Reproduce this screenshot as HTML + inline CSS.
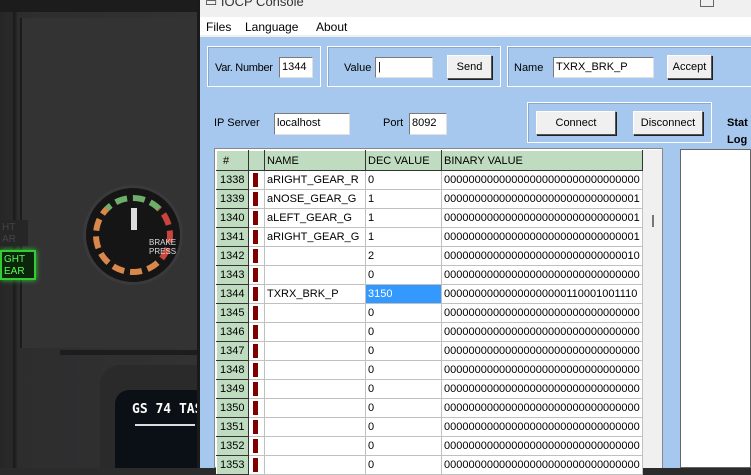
<!DOCTYPE html>
<html><head><meta charset="utf-8"><style>
*{margin:0;padding:0;box-sizing:border-box}
body{width:751px;height:468px;overflow:hidden;position:relative;background:#2b2b2c;font-family:"Liberation Sans",sans-serif;font-size:11px;color:#000}
.a{position:absolute;white-space:nowrap}
.grp{position:absolute;border:1px solid #fff;box-shadow:inset 1px 1px 0 #8aa8c8}
.inp{position:absolute;background:#fff;border:1px solid #7a7a7a;border-right-color:#e0e0e0;border-bottom-color:#e0e0e0;padding:1px 2px;font-size:11px;line-height:17px;white-space:nowrap;overflow:hidden}
.btn{position:absolute;background:#f0f0f0;border:1px solid #fff;border-right-color:#555;border-bottom-color:#555;box-shadow:1px 1px 0 #222;text-align:center;font-size:11px}
table{border-collapse:collapse;position:absolute;left:216px;top:150px;table-layout:fixed;width:426px}
td{height:19px;border:1px solid #c0c0c0;padding:0 2px;font-size:11px;white-space:nowrap;overflow:hidden;background:#fff;line-height:16px}
td.n{background:#c0dcc0;border:1px solid #fff;border-right-color:#333;border-bottom-color:#333;padding-left:3px}
.mk{display:inline-block;width:5px;height:14px;background:#800000;vertical-align:middle;margin-left:2px}
tr.h td{background:#c0dcc0;border:1px solid #fff;border-right-color:#333;border-bottom-color:#333;height:20px}
</style></head><body>
<div class="a" style="left:0;top:0;width:198px;height:468px;background:linear-gradient(90deg,#262627 0,#2a2a2b 12px,#1a1a1a 14px,#2d2d2e 18px,#323233 200px)"></div>
<div class="a" style="left:0;top:0;width:198px;height:12px;background:#1c1c1c"></div>
<div class="a" style="left:20px;top:18px;width:178px;height:330px;background:#333334;border-left:2px solid #1b1b1b"></div>
<div class="a" style="left:60px;top:350px;width:138px;height:5px;background:#1d1d1d"></div>
<div class="a" style="left:100px;top:365px;width:98px;height:103px;background:#2a2a2b;border-radius:20px 0 0 0"></div>
<div class="a" style="left:115px;top:390px;width:83px;height:78px;background:#0b1016;border-radius:14px 0 0 0"></div>
<div class="a" style="left:132px;top:402px;color:#fff;font-size:13px;font-weight:bold;font-family:'DejaVu Sans Mono',monospace">GS 74 TAS</div>
<div class="a" style="left:135px;top:424px;width:60px;height:2px;background:#ddd"></div>
<div class="a" style="left:83px;top:185px;width:100px;height:100px;border-radius:50%;background:#151516;border:3px solid #3a3a3c"></div>
<div class="a" style="left:93px;top:195px;width:80px;height:80px;border-radius:50%;border:6px dashed #d9884a;border-top-color:#6fae6a;border-right-color:#c8443c"></div>
<div class="a" style="left:131px;top:208px;width:6px;height:22px;background:#ddd"></div>
<div class="a" style="left:149px;top:238px;color:#ddd;font-size:8px;line-height:9px">BRAKE<br>PRESS</div>
<div class="a" style="left:0;top:250px;width:36px;height:30px;border:2px solid #3c3;background:#0b260b;color:#5f5;font-size:10px;line-height:12px;padding:2px 0 0 2px;box-shadow:0 0 5px #3c3">GHT<br>EAR</div>
<div class="a" style="left:0;top:220px;width:28px;height:26px;background:#262626;color:#444;font-size:10px;line-height:12px;padding:2px">HT<br>AR</div>

<div class="a" style="left:197px;top:0;width:3px;height:468px;background:#1a1a1a"></div>
<div class="a" style="left:200px;top:0;width:551px;height:17px;background:#f0f0f0"></div>
<div class="a" style="left:205px;top:-6px;font-size:13px;color:#333">▭ IOCP Console</div>
<div class="a" style="left:700px;top:0;width:14px;height:7px;border:1px solid #666;border-top:none"></div>
<div class="a" style="left:200px;top:17px;width:551px;height:18px;background:#fff"></div>
<div class="a" style="left:206px;top:20px;font-size:12px">Files</div>
<div class="a" style="left:245px;top:20px;font-size:12px">Language</div>
<div class="a" style="left:316px;top:20px;font-size:12px">About</div>
<div class="a" style="left:200px;top:35px;width:551px;height:2px;background:#f0f0f0"></div>
<div class="a" style="left:200px;top:37px;width:551px;height:431px;background:#a6c8ee"></div>

<div class="grp" style="left:207px;top:46px;width:114px;height:41px"></div>
<div class="a" style="left:215px;top:62px;letter-spacing:-0.3px">Var. Number</div>
<div class="inp" style="left:279px;top:57px;width:34px;height:21px">1344</div>
<div class="grp" style="left:327px;top:46px;width:174px;height:41px"></div>
<div class="a" style="left:344px;top:62px">Value</div>
<div class="inp" style="left:375px;top:57px;width:58px;height:21px">|</div>
<div class="btn" style="left:447px;top:55px;width:45px;height:24px;line-height:22px">Send</div>
<div class="grp" style="left:507px;top:46px;width:250px;height:41px"></div>
<div class="a" style="left:514px;top:62px">Name</div>
<div class="inp" style="left:553px;top:57px;width:101px;height:21px">TXRX_BRK_P</div>
<div class="btn" style="left:667px;top:55px;width:45px;height:24px;line-height:22px">Accept</div>

<div class="a" style="left:214px;top:117px">IP Server</div>
<div class="inp" style="left:274px;top:113px;width:76px;height:22px">localhost</div>
<div class="a" style="left:383px;top:117px">Port</div>
<div class="inp" style="left:409px;top:113px;width:38px;height:22px">8092</div>
<div class="grp" style="left:527px;top:102px;width:185px;height:41px"></div>
<div class="btn" style="left:516px;top:111px;width:74px;height:24px;line-height:22px;left:536px;width:80px">Connect</div>
<div class="btn" style="left:633px;top:111px;width:70px;height:24px;line-height:22px">Disconnect</div>
<div class="a" style="left:727px;top:117px;font-weight:bold">Stat</div>
<div class="a" style="left:727px;top:134px;font-weight:bold">Log</div>

<div class="a" style="left:214px;top:148px;width:449px;height:320px;background:#fff;border:1px solid #888"></div>
<div class="a" style="left:643px;top:150px;width:19px;height:318px;background:#f0f0f0"></div>
<div class="a" style="left:652px;top:215px;width:2px;height:12px;background:#777"></div>
<div class="a" style="left:680px;top:149px;width:71px;height:319px;background:#fff;border:1px solid #666"></div>

<table>
<colgroup><col style="width:32px"><col style="width:16px"><col style="width:101px"><col style="width:76px"><col style="width:201px"></colgroup>
<tr class="h"><td style="padding-left:6px">#</td><td></td><td>NAME</td><td>DEC VALUE</td><td>BINARY VALUE</td></tr>
<tr><td class="n">1338</td><td><span class="mk"></span></td><td>aRIGHT_GEAR_R</td><td>0</td><td>00000000000000000000000000000000</td></tr>
<tr><td class="n">1339</td><td><span class="mk"></span></td><td>aNOSE_GEAR_G</td><td>1</td><td>00000000000000000000000000000001</td></tr>
<tr><td class="n">1340</td><td><span class="mk"></span></td><td>aLEFT_GEAR_G</td><td>1</td><td>00000000000000000000000000000001</td></tr>
<tr><td class="n">1341</td><td><span class="mk"></span></td><td>aRIGHT_GEAR_G</td><td>1</td><td>00000000000000000000000000000001</td></tr>
<tr><td class="n">1342</td><td><span class="mk"></span></td><td></td><td>2</td><td>00000000000000000000000000000010</td></tr>
<tr><td class="n">1343</td><td><span class="mk"></span></td><td></td><td>0</td><td>00000000000000000000000000000000</td></tr>
<tr><td class="n">1344</td><td><span class="mk"></span></td><td>TXRX_BRK_P</td><td style="background:#3399ff;color:#fff">3150</td><td>00000000000000000000110001001110</td></tr>
<tr><td class="n">1345</td><td><span class="mk"></span></td><td></td><td>0</td><td>00000000000000000000000000000000</td></tr>
<tr><td class="n">1346</td><td><span class="mk"></span></td><td></td><td>0</td><td>00000000000000000000000000000000</td></tr>
<tr><td class="n">1347</td><td><span class="mk"></span></td><td></td><td>0</td><td>00000000000000000000000000000000</td></tr>
<tr><td class="n">1348</td><td><span class="mk"></span></td><td></td><td>0</td><td>00000000000000000000000000000000</td></tr>
<tr><td class="n">1349</td><td><span class="mk"></span></td><td></td><td>0</td><td>00000000000000000000000000000000</td></tr>
<tr><td class="n">1350</td><td><span class="mk"></span></td><td></td><td>0</td><td>00000000000000000000000000000000</td></tr>
<tr><td class="n">1351</td><td><span class="mk"></span></td><td></td><td>0</td><td>00000000000000000000000000000000</td></tr>
<tr><td class="n">1352</td><td><span class="mk"></span></td><td></td><td>0</td><td>00000000000000000000000000000000</td></tr>
<tr><td class="n">1353</td><td><span class="mk"></span></td><td></td><td>0</td><td>00000000000000000000000000000000</td></tr>
</table>
</body></html>
